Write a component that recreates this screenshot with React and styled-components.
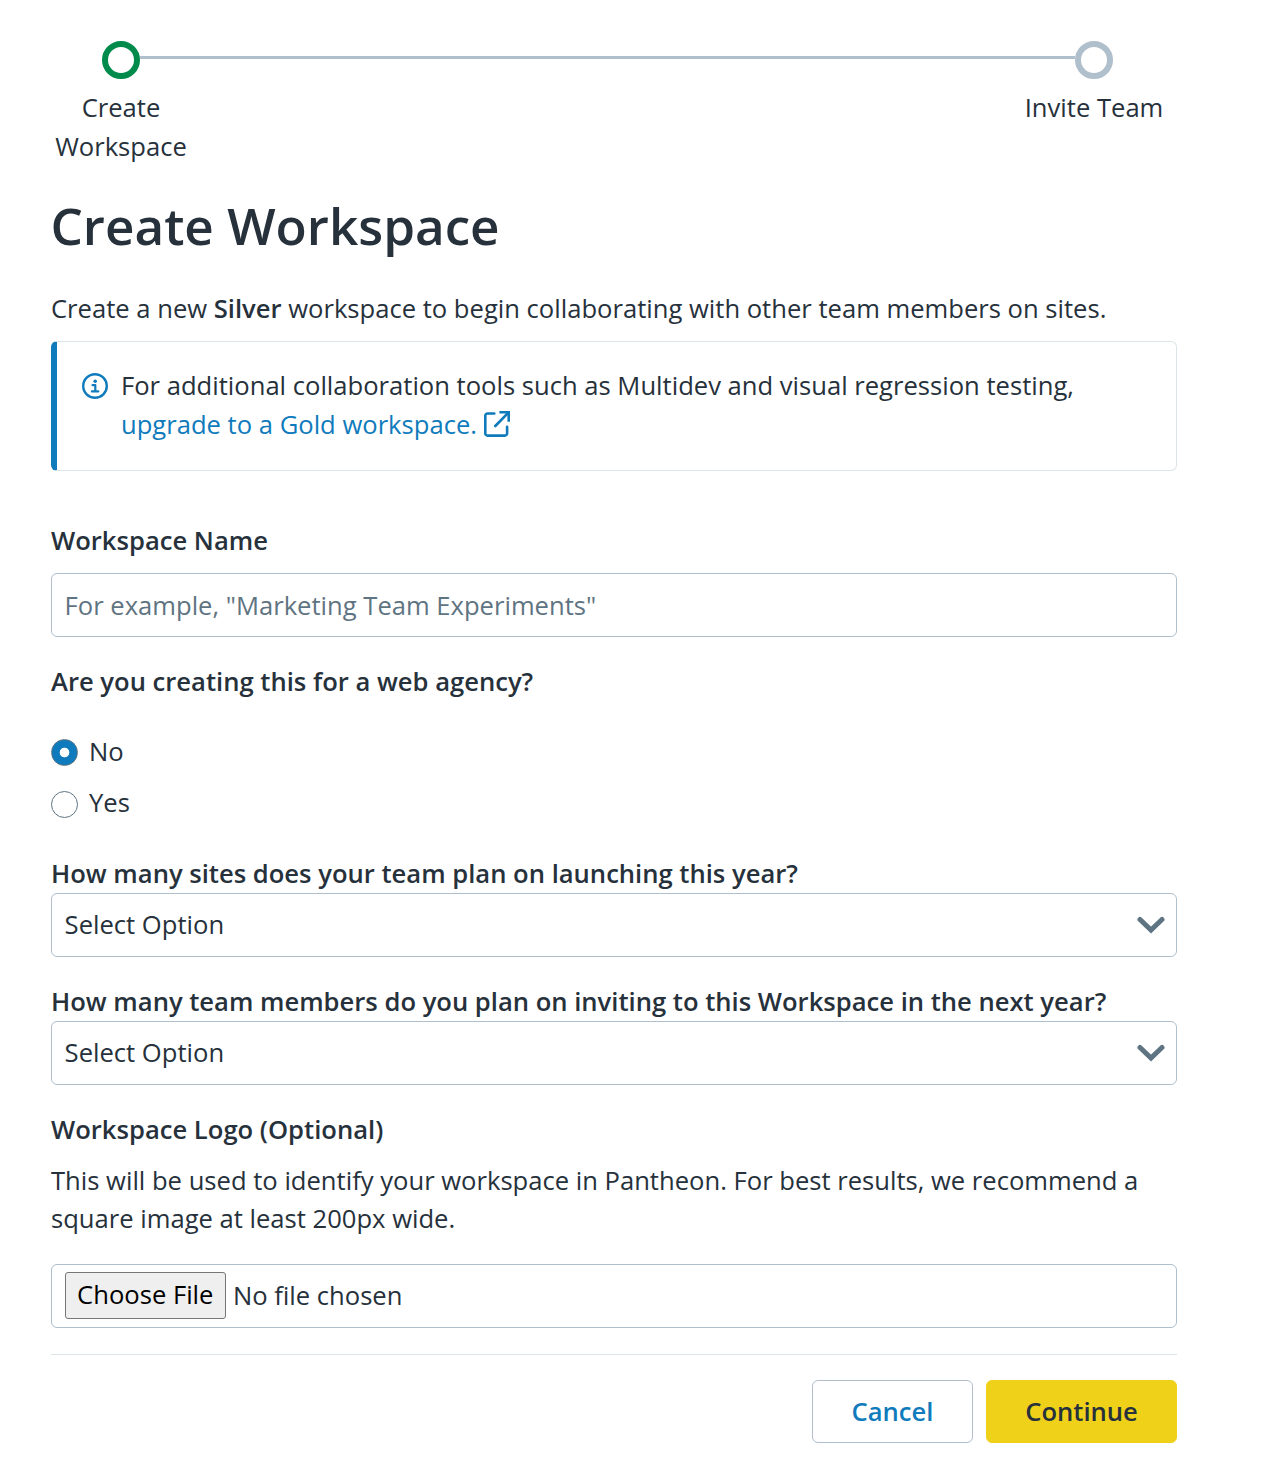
import React, { useState } from "react";
import styled, { createGlobalStyle } from "styled-components";

const color = {
  text: "#26313b",
  blue: "#0f7bbc",
  green: "#008a4b",
  steel: "#b0bfcc",
  rule: "#dbe4e6",
  slate: "#5f7482",
  yellow: "#efd11a",
};

const GlobalStyle = createGlobalStyle`
  *, *::before, *::after { box-sizing: border-box; }
  body {
    margin: 0;
    background: #fff;
    color: ${color.text};
    font-family: "Open Sans", "Noto Sans", sans-serif;
    font-size: 25.6px;
    line-height: 38.4px;
  }
`;

const Page = styled.main`
  display: flex;
  flex-direction: column;
  width: 1177px;
  padding: 41px 0 29px 51px;
`;

const Track = styled.div`
  display: flex;
  align-items: flex-start;
  padding: 0 64px 0 51px;
`;

const StepDot = styled.span`
  flex: none;
  width: 38px;
  height: 38px;
  border: 6px solid ${(p) => (p.$active ? color.green : color.steel)};
  border-radius: 50%;
`;

const StepLine = styled.span`
  flex: 1;
  height: 3px;
  margin-top: 15px;
  background: ${color.steel};
`;

const StepLabels = styled.div`
  display: flex;
  justify-content: space-between;
  padding: 9px 13px 0 0;
  line-height: 39px;
`;

const StepLabel = styled.span`
  width: 140px;
  text-align: center;
`;

const Title = styled.h1`
  margin: 29px 0 0 -0.6px;
  font-size: 51.2px;
  font-weight: 600;
  line-height: 61.4px;
`;

const Intro = styled.p`
  margin: 33.6px 0 0;

  strong {
    font-weight: 600;
  }
`;

const Notice = styled.section`
  display: flex;
  gap: 13px;
  height: 130px;
  margin-top: 12.6px;
  padding: 24px 24px 24px 25px;
  border: 1px solid ${color.rule};
  border-left: 6px solid ${color.blue};
  border-radius: 6px;
  line-height: 39px;

  > svg {
    flex: none;
    margin-top: 7px;
  }
`;

const NoticeText = styled.p`
  margin: 0;
`;

const TextLink = styled.a`
  color: ${color.blue};
  text-decoration: none;

  svg {
    margin-left: 7px;
    vertical-align: -3px;
  }
`;

const Field = styled.div`
  display: flex;
  flex-direction: column;
  gap: ${(p) => p.$gap || 0}px;
  margin-top: ${(p) => p.$top}px;
`;

const Label = styled.label`
  height: 39px;
  padding-top: 1px;
  font-weight: 600;
`;

const Control = styled.div`
  display: flex;
  align-items: center;
  height: 64px;
  padding: 0 11px 0 12.6px;
  border: 1px solid ${color.steel};
  border-radius: 6px;
`;

const TextInput = styled.input`
  flex: 1;
  padding: 2px 0 0;
  border: 0;
  outline: 0;
  background: none;
  color: inherit;
  font: inherit;

  &::placeholder {
    color: ${color.slate};
    opacity: 1;
  }
`;

const SelectValue = styled.span`
  flex: 1;
`;

const RadioList = styled.div`
  display: flex;
  flex-direction: column;
  gap: 12.8px;
`;

const RadioOption = styled.label`
  display: flex;
  gap: 11px;
  height: 38.4px;
  line-height: 40.4px;
`;

const Radio = styled.input`
  appearance: none;
  flex: none;
  width: 27px;
  height: 27px;
  margin: 7.4px 0 0;
  border: 1px solid ${color.slate};
  border-radius: 50%;
  background: #fff;

  &:checked {
    background: radial-gradient(circle, #fff 4.4px, ${color.blue} 5.2px);
  }
`;

const Help = styled.p`
  margin: 0;
`;

const FileButton = styled.button`
  height: 47px;
  margin: 0 7px 0 0;
  padding: 0 11.5px 1px;
  border: 1px solid #767676;
  border-radius: 3px;
  background: #efefef;
  color: #000;
  font: inherit;
`;

const Actions = styled.footer`
  display: flex;
  justify-content: flex-end;
  gap: 13px;
  margin-top: 26px;
  padding-top: 25px;
  border-top: 1px solid ${color.rule};
`;

const Button = styled.button`
  width: ${(p) => (p.$primary ? 191 : 161)}px;
  height: 63px;
  padding: 2px 0 0;
  border: 1px solid ${(p) => (p.$primary ? color.yellow : color.steel)};
  border-radius: 6px;
  background: ${(p) => (p.$primary ? color.yellow : "#fff")};
  color: ${(p) => (p.$primary ? color.text : color.blue)};
  font: inherit;
  font-weight: 600;
`;

const InfoIcon = () => (
  <svg width="26" height="26" viewBox="0 0 26 26" fill="none" stroke={color.blue}>
    <circle cx="13" cy="13" r="11.8" strokeWidth="2.4" />
    <circle cx="13.2" cy="8.3" r="1.8" fill={color.blue} stroke="none" />
    <path d="M10.5 12.1h2.8v6.2M9.9 18.4h6.4" strokeWidth="2.2" strokeLinecap="round" strokeLinejoin="round" />
  </svg>
);

const ExternalIcon = () => (
  <svg width="26" height="26" viewBox="0 0 26 26" fill="none" stroke={color.blue} strokeWidth="2.6">
    <path d="M10.3 2.5H3.5A2.2 2.2 0 0 0 1.3 4.7v17.7a2.2 2.2 0 0 0 2.2 2.2h17.4a2.2 2.2 0 0 0 2.2-2.2v-6.7" strokeLinecap="round" />
    <path d="M11.3 15 24.4 1.7" strokeLinecap="round" />
    <path d="M15.4 1.3h9.3v9.4" />
  </svg>
);

const ChevronIcon = () => (
  <svg width="28" height="18" viewBox="0 0 28 18" fill="none" stroke={color.slate}>
    <path d="M3 3.5 14 14.1 25 3.5" strokeWidth="5" strokeLinecap="round" />
  </svg>
);

const SelectField = ({ label, top }) => (
  <Field $top={top}>
    <Label>{label}</Label>
    <Control role="combobox" aria-expanded="false" tabIndex={0}>
      <SelectValue>Select Option</SelectValue>
      <ChevronIcon />
    </Control>
  </Field>
);

export default function App() {
  const [agency, setAgency] = useState("No");
  return (
    <>
      <GlobalStyle />
      <Page>
        <Track>
          <StepDot $active />
          <StepLine />
          <StepDot />
        </Track>
        <StepLabels>
          <StepLabel>Create Workspace</StepLabel>
          <StepLabel>Invite Team</StepLabel>
        </StepLabels>

        <Title>Create Workspace</Title>
        <Intro>
          Create a new <strong>Silver</strong> workspace to begin collaborating with other team members on sites.
        </Intro>
        <Notice>
          <InfoIcon />
          <NoticeText>
            For additional collaboration tools such as Multidev and visual regression testing,{" "}
            <TextLink href="#">
              upgrade to a Gold workspace.
              <ExternalIcon />
            </TextLink>
          </NoticeText>
        </Notice>

        <Field $top={50} $gap={13}>
          <Label htmlFor="name">Workspace Name</Label>
          <Control>
            <TextInput id="name" placeholder={'For example, "Marketing Team Experiments"'} />
          </Control>
        </Field>

        <Field $top={25} $gap={31}>
          <Label as="span">Are you creating this for a web agency?</Label>
          <RadioList>
            {["No", "Yes"].map((value) => (
              <RadioOption key={value}>
                <Radio type="radio" name="agency" checked={agency === value} onChange={() => setAgency(value)} />
                {value}
              </RadioOption>
            ))}
          </RadioList>
        </Field>

        <SelectField top={32.4} label="How many sites does your team plan on launching this year?" />
        <SelectField top={25} label="How many team members do you plan on inviting to this Workspace in the next year?" />

        <Field $top={25} $gap={13}>
          <Label as="span">Workspace Logo (Optional)</Label>
          <Help>
            This will be used to identify your workspace in Pantheon. For best results, we recommend a square image at
            least 200px wide.
          </Help>
        </Field>
        <Field $top={25}>
          <Control>
            <FileButton type="button">Choose File</FileButton>
            No file chosen
          </Control>
        </Field>

        <Actions>
          <Button type="button">Cancel</Button>
          <Button type="button" $primary>
            Continue
          </Button>
        </Actions>
      </Page>
    </>
  );
}
